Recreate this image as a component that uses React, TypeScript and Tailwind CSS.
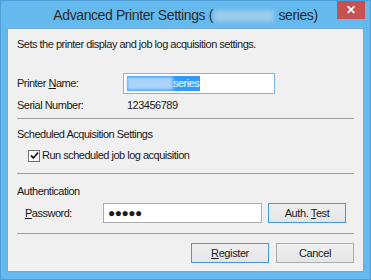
import React from "react";

const font = { fontFamily: '"Liberation Sans", Arial, sans-serif' };

function Btn({ label, u, rest, primary }: { label?: string; u: string; rest: string; primary?: boolean }) {
  return (
    <div
      className={`h-[20px] w-[78px] flex items-center justify-center text-[11px] tracking-[-0.4px] text-[#1a1a1a] bg-gradient-to-b from-[#f0f0f0] to-[#e5e5e5] border ${
        primary ? "border-[#3c9ae8]" : "border-[#adadad]"
      }`}
    >
      <span className="whitespace-pre">
        {label}
        <span className="underline underline-offset-1">{u}</span>
        {rest}
      </span>
    </div>
  );
}

export default function App() {
  return (
    <div
      className="w-[371px] h-[280px] bg-[#64baef] border border-[#4f9fd6] flex flex-col overflow-hidden"
      style={font}
    >
      <div className="h-[27px] relative flex items-center justify-center text-[14px] tracking-[-0.4px] text-[#2a2a2a] pt-[2px]">
        <span className="whitespace-pre">Advanced Printer Settings (</span>
        <span className="inline-block w-[60px] h-[12px] bg-[#9ccbe9] blur-[2px] mx-[1px]" />
        <span className="whitespace-pre"> series)</span>
        <div className="absolute top-[-1px] right-[5px] w-[28px] h-[19px] bg-[#c75050] flex items-center justify-center text-white text-[12px] font-bold">
          ✕
        </div>
      </div>
      <div className="mx-[6px] flex-1 mb-[7px] bg-[#f0f0f0] border border-[#7da7cc] flex flex-col px-[9px] text-[11px] tracking-[-0.5px] text-[#1a1a1a]">
        <div className="h-[16px] mt-[7px] flex items-center">
          Sets the printer display and job log acquisition settings.
        </div>
        <div className="h-[21px] mt-[21px] flex items-center">
          <div className="w-[106px]">
            Printer <span className="underline underline-offset-1">N</span>ame:
          </div>
          <div className="w-[152px] h-[21px] bg-white border border-[#7eb4ea] flex items-center pl-[3px]">
            <div className="h-[15px] flex items-center bg-[#3399ff] text-white">
              <span className="inline-block w-[46px] h-[13px] bg-[#a9d3fb] blur-[1.5px]" />
              <span className="pr-[1px]">series</span>
            </div>
          </div>
        </div>
        <div className="h-[16px] mt-[3px] flex items-center">
          <div className="w-[110px]">Serial Number:</div>
          <div>123456789</div>
        </div>
        <div className="h-px mt-[5px] bg-[#a0a0a0]" />
        <div className="h-[16px] mt-[7px] flex items-center">Scheduled Acquisition Settings</div>
        <div className="h-[13px] mt-[7px] flex items-center pl-[11px]">
          <div className="w-[12px] h-[12px] bg-white border border-[#707070] flex items-center justify-center mr-[2px]">
            <svg width="9" height="9" viewBox="0 0 9 9">
              <path d="M1 4.5 L3.5 7 L8 1.5" fill="none" stroke="#1a1a1a" strokeWidth="1.8" />
            </svg>
          </div>
          <span>
            Run scheduled <span className="underline underline-offset-1">j</span>ob log acquisition
          </span>
        </div>
        <div className="h-px mt-[11px] bg-[#a0a0a0]" />
        <div className="h-[16px] mt-[9px] flex items-center">Authentication</div>
        <div className="h-[20px] mt-[4px] flex items-center">
          <div className="w-[86px] pl-[8px]">
            <span className="underline underline-offset-1">P</span>assword:
          </div>
          <div className="w-[159px] h-[20px] bg-white border border-[#abadb3] flex items-center pl-[4px] text-[12px] tracking-[-0.5px]">
            ●●●●●
          </div>
          <div className="ml-[6px]">
            <Btn label="Auth. " u="T" rest="est" primary />
          </div>
        </div>
        <div className="h-px mt-[10px] bg-[#a0a0a0]" />
        <div className="h-[20px] mt-[9px] flex justify-end gap-[7px]">
          <Btn u="R" rest="egister" primary />
          <Btn u="" rest="Cancel" />
        </div>
      </div>
    </div>
  );
}
